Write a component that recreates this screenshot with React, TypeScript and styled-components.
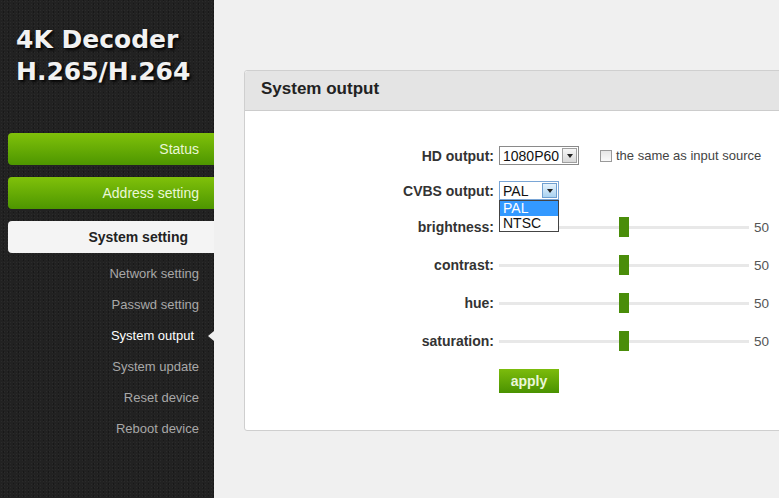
import styled, { createGlobalStyle } from "styled-components";

const GlobalStyle = createGlobalStyle`
  html, body {
    margin: 0;
    padding: 0;
    background: #f0f0f0;
    font-family: "Liberation Sans", Arial, sans-serif;
  }
`;

const Page = styled.div`
  display: flex;
  width: 779px;
  height: 498px;
  overflow: hidden;
`;

const Sidebar = styled.aside`
  width: 214px;
  flex-shrink: 0;
  background-color: #222;
  background-image:
    radial-gradient(rgba(255, 255, 255, 0.04) 1px, transparent 1px),
    radial-gradient(rgba(0, 0, 0, 0.3) 1px, transparent 1px);
  background-size: 3px 3px, 5px 4px;
  background-position: 0 0, 1px 2px;
  display: flex;
  flex-direction: column;
`;

const Logo = styled.div`
  padding: 24px 0 0 16px;
  height: 133px;
  box-sizing: border-box;
  font-family: "DejaVu Sans", Verdana, sans-serif;
  font-weight: bold;
  font-size: 25px;
  line-height: 32px;
  color: #f2f2f2;
  text-shadow: 2px 2px 3px rgba(0, 0, 0, 0.9);
`;

const NavButtons = styled.div`
  display: flex;
  flex-direction: column;
  gap: 12px;
  padding-left: 8px;
`;

const NavButton = styled.div<{ $active?: boolean }>`
  height: 32px;
  border-radius: 4px 0 0 4px;
  display: flex;
  align-items: center;
  justify-content: flex-end;
  padding-right: ${(p) => (p.$active ? "26px" : "15px")};
  font-size: 14px;
  ${(p) =>
    p.$active
      ? `
    background: #f4f4f4;
    color: #222;
    font-weight: bold;
  `
      : `
    background: linear-gradient(#80c10a, #4d9600);
    color: #eaf7d6;
  `}
`;

const SubNav = styled.div`
  display: flex;
  flex-direction: column;
  padding-top: 5px;
`;

const SubItem = styled.div<{ $current?: boolean }>`
  position: relative;
  height: 31px;
  display: flex;
  align-items: center;
  justify-content: flex-end;
  padding-right: ${(p) => (p.$current ? "20px" : "15px")};
  font-size: 13px;
  color: ${(p) => (p.$current ? "#ffffff" : "#a8a8a8")};
`;

const Pointer = styled.span`
  position: absolute;
  right: 0;
  top: 50%;
  margin-top: -5px;
  width: 0;
  height: 0;
  border-top: 5px solid transparent;
  border-bottom: 5px solid transparent;
  border-right: 6px solid #f0f0f0;
`;

const Main = styled.main`
  flex: 1;
  padding: 70px 0 0 30px;
  overflow: hidden;
`;

const Panel = styled.section`
  width: 560px;
  background: #fff;
  border: 1px solid #cfcfcf;
  border-radius: 3px 0 0 3px;
`;

const PanelHeader = styled.div`
  height: 40px;
  box-sizing: border-box;
  padding: 0 0 4px 16px;
  background: #e4e4e4;
  border-bottom: 1px solid #cccccc;
  display: flex;
  align-items: center;
  font-size: 17px;
  font-weight: bold;
  color: #222;
  border-radius: 3px 0 0 0;
`;

const Form = styled.div`
  padding: 27px 0 37px;
`;

const Row = styled.div<{ $h: number }>`
  height: ${(p) => p.$h}px;
  display: grid;
  grid-template-columns: 249px auto;
  column-gap: 5px;
  align-items: center;
`;

const Label = styled.label`
  text-align: right;
  font-size: 14px;
  font-weight: bold;
  color: #333;
`;

const Controls = styled.div`
  display: flex;
  align-items: center;
`;

const SelectBox = styled.div<{ $w: number; $open?: boolean }>`
  position: relative;
  width: ${(p) => p.$w}px;
  height: 19px;
  box-sizing: border-box;
  border: 1px solid ${(p) => (p.$open ? "#7aa6d6" : "#8a8a8a")};
  background: #fff;
  display: flex;
  align-items: center;
  justify-content: space-between;
  padding-left: 3px;
  font-size: 14px;
  color: #111;
`;

const ArrowButton = styled.span<{ $open?: boolean }>`
  width: 15px;
  height: 15px;
  margin-right: 1px;
  box-sizing: border-box;
  border: 1px solid ${(p) => (p.$open ? "#6f9fd0" : "#a0a0a0")};
  background: ${(p) =>
    p.$open ? "linear-gradient(#e4f2fc, #a9d2f1)" : "linear-gradient(#f6f6f6, #d8d8d8)"};
  display: flex;
  align-items: center;
  justify-content: center;

  &::after {
    content: "";
    border-left: 3px solid transparent;
    border-right: 3px solid transparent;
    border-top: 4px solid #222;
  }
`;

const DropList = styled.ul`
  position: absolute;
  left: -1px;
  top: 18px;
  width: 60px;
  margin: 0;
  padding: 0;
  list-style: none;
  background: #fff;
  border: 1px solid #444;
  box-sizing: border-box;
  z-index: 2;
`;

const DropOption = styled.li<{ $selected?: boolean }>`
  height: 15px;
  line-height: 15px;
  padding-left: 3px;
  font-size: 14px;
  background: ${(p) => (p.$selected ? "#3399ff" : "#fff")};
  color: ${(p) => (p.$selected ? "#fff" : "#111")};
`;

const CheckLabel = styled.span`
  display: flex;
  align-items: center;
  gap: 4px;
  margin-left: 21px;
  font-size: 13px;
  color: #444;
`;

const CheckBox = styled.span`
  width: 12px;
  height: 12px;
  box-sizing: border-box;
  border: 1px solid #9a9a9a;
  background: linear-gradient(#e6e6e6, #fafafa);
`;

const Slider = styled.div`
  position: relative;
  width: 250px;
  height: 20px;
  display: flex;
  align-items: center;
`;

const Track = styled.div`
  width: 100%;
  height: 3px;
  background: #e8e8e8;
`;

const Thumb = styled.span`
  position: absolute;
  top: 0;
  width: 10px;
  height: 20px;
  margin-left: -5px;
  background: #4a8d0a;
`;

const Value = styled.span`
  margin-left: 5px;
  font-size: 13.5px;
  color: #555;
`;

const ApplyRow = styled.div`
  padding: 9px 0 0 254px;
`;

const ApplyButton = styled.button`
  width: 60px;
  height: 24px;
  border: none;
  padding: 0;
  background: linear-gradient(#7cbc0c, #4a9200);
  color: #eaf7d8;
  font-family: "Liberation Sans", Arial, sans-serif;
  font-size: 14px;
  font-weight: bold;
`;

const subItems = [
  "Network setting",
  "Passwd setting",
  "System output",
  "System update",
  "Reset device",
  "Reboot device",
];

const sliders = [
  { name: "brightness", value: 50 },
  { name: "contrast", value: 50 },
  { name: "hue", value: 50 },
  { name: "saturation", value: 50 },
];

export default function App() {
  return (
    <Page>
      <GlobalStyle />
      <Sidebar>
        <Logo>
          4K Decoder
          <br />
          H.265/H.264
        </Logo>
        <NavButtons>
          <NavButton>Status</NavButton>
          <NavButton>Address setting</NavButton>
          <NavButton $active>System setting</NavButton>
        </NavButtons>
        <SubNav>
          {subItems.map((item) => (
            <SubItem key={item} $current={item === "System output"}>
              {item}
              {item === "System output" && <Pointer />}
            </SubItem>
          ))}
        </SubNav>
      </Sidebar>
      <Main>
        <Panel>
          <PanelHeader>System output</PanelHeader>
          <Form>
            <Row $h={35}>
              <Label>HD output:</Label>
              <Controls>
                <SelectBox $w={80}>
                  1080P60
                  <ArrowButton />
                </SelectBox>
                <CheckLabel>
                  <CheckBox />
                  the same as input source
                </CheckLabel>
              </Controls>
            </Row>
            <Row $h={35}>
              <Label>CVBS output:</Label>
              <Controls>
                <SelectBox $w={60} $open>
                  PAL
                  <ArrowButton $open />
                  <DropList>
                    <DropOption $selected>PAL</DropOption>
                    <DropOption>NTSC</DropOption>
                  </DropList>
                </SelectBox>
              </Controls>
            </Row>
            {sliders.map((s) => (
              <Row $h={38} key={s.name}>
                <Label>{s.name}:</Label>
                <Controls>
                  <Slider>
                    <Track />
                    <Thumb style={{ left: `${s.value}%` }} />
                  </Slider>
                  <Value>{s.value}</Value>
                </Controls>
              </Row>
            ))}
            <ApplyRow>
              <ApplyButton>apply</ApplyButton>
            </ApplyRow>
          </Form>
        </Panel>
      </Main>
    </Page>
  );
}
